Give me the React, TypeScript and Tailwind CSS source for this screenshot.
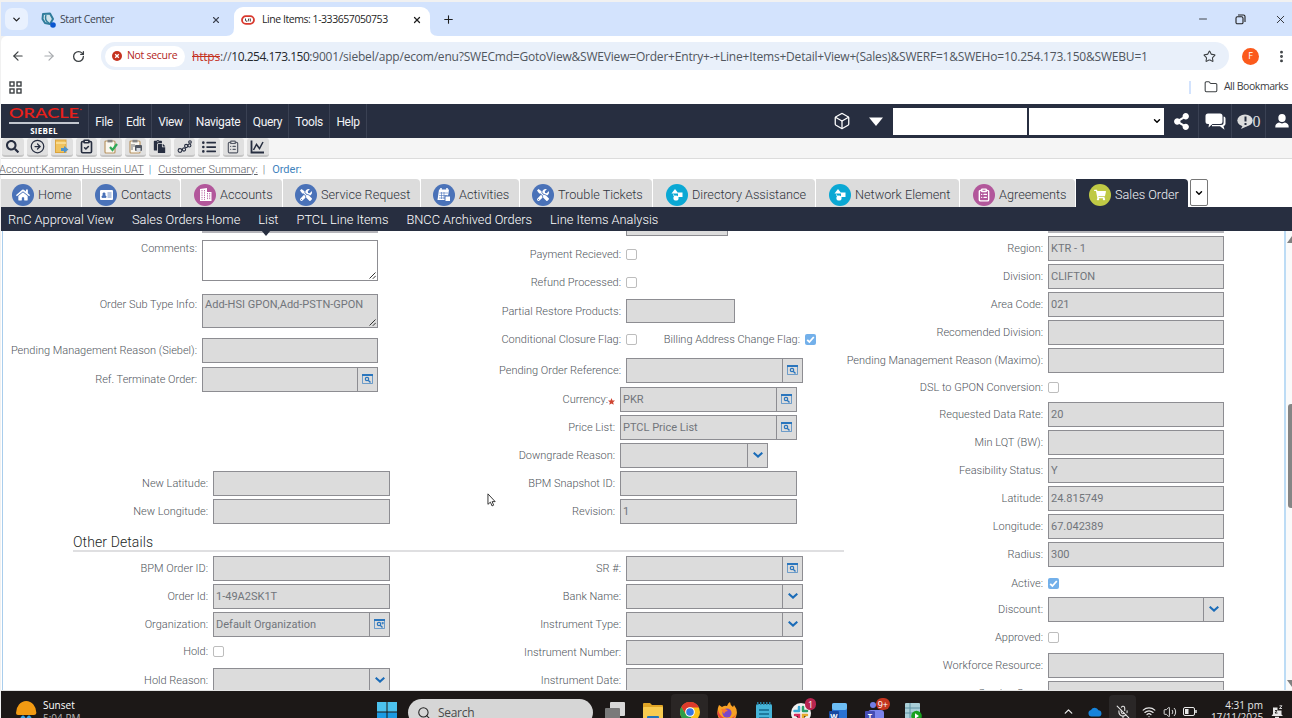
import type { ReactNode } from 'react';
import clsx from 'clsx';
import {
  ArrowLeft, ArrowRight, ChevronDown, ChevronUp, Folder, Minus, MoreVertical, Plus, RotateCw, Star, X, Box, Search,
  MicOff, Wifi, Volume2,
} from 'lucide-react';
import { FaHome, FaShoppingCart, FaShareAlt, FaSearch, FaPaste, FaListUl, FaTools } from 'react-icons/fa';
import { LuClipboardList, LuClipboardCheck, LuCircleArrowRight } from 'react-icons/lu';

/* ---------- browser ---------- */

function BrowserTabs() {
  return (
    <div className="flex h-[34px] shrink-0 items-end bg-[#d3e3fd] text-[#1f1f1f]">
      <div className="mb-[6px] ml-[4px] flex h-[22px] w-[23px] items-center justify-center rounded-[7px] bg-[#e9f1fe]">
        <ChevronDown size={11} strokeWidth={2.8} />
      </div>
      <div className="flex h-[34px] w-[206px] items-center pt-px pl-[13px] text-[#3c4350]">
        <svg width="15" height="16" viewBox="0 0 15 16">
          <path d="M2 2 L9 1.5 L12 7 L9 12 L4 11 L1.5 7 Z" fill="#cfe3ea" stroke="#2f7c9c" strokeWidth="2" strokeLinejoin="round" />
          <path d="M5 3 Q3 8 8 11" fill="none" stroke="#2f7c9c" strokeWidth="1.4" />
          <circle cx="12" cy="13" r="2.8" fill="#0b57d0" />
        </svg>
        <span className="ml-[4px] text-[10.5px] tracking-[-0.4px]">Start Center</span>
        <X size={10} strokeWidth={2.6} className="mr-[13px] ml-auto" />
      </div>
      <div className="relative flex h-[29px] w-[196px] items-center rounded-t-[9px] bg-white pb-[4px] pl-[7px]">
        <svg width="8" height="8" viewBox="0 0 8 8" className="absolute bottom-0 -left-[8px]">
          <path d="M8 0 V8 H0 Q8 8 8 0 Z" fill="#fff" />
        </svg>
        <svg width="8" height="8" viewBox="0 0 8 8" className="absolute -right-[8px] bottom-0">
          <path d="M0 0 V8 H8 Q0 8 0 0 Z" fill="#fff" />
        </svg>
        <svg width="14" height="10" viewBox="0 0 14 10">
          <rect x="1" y="1.2" width="12" height="7.6" rx="3.8" fill="#fff" stroke="#d93a2f" strokeWidth="1.8" />
          <path d="M4.5 3.5 V5 Q4.5 6.5 6 6.3 M7 6.5 L7.8 3.5 M9.3 3.5 V6.5" fill="none" stroke="#444" strokeWidth="1" />
        </svg>
        <span className="ml-[7px] text-[10.5px] tracking-[-0.45px] whitespace-nowrap">Line Items: 1-333657050753</span>
        <X size={10} strokeWidth={3} className="mr-[8px] ml-auto" />
      </div>
      <Plus size={13} strokeWidth={2} className="mb-[10px] ml-[12px]" />
      <div className="mr-[5px] ml-auto flex items-center self-center">
        <Minus size={12} strokeWidth={1.6} className="mr-[26px]" />
        <svg width="11" height="11" viewBox="0 0 11 11" fill="none" stroke="currentColor" strokeWidth="1.1" className="mr-[28px]">
          <rect x="1" y="2.8" width="7" height="7" rx="1.4" />
          <path d="M3 1 H8.4 Q10 1 10 2.6 V8" />
        </svg>
        <X size={13} strokeWidth={1.6} />
      </div>
    </div>
  );
}

function AddressBar() {
  return (
    <div className="flex h-[40px] shrink-0 items-center rounded-tl-[6px] bg-white text-[#3c4043]">
      <ArrowLeft size={14} strokeWidth={2.1} className="ml-[10px]" />
      <ArrowRight size={14} strokeWidth={2} className="ml-[17px] text-[#a8abaf]" />
      <RotateCw size={13} strokeWidth={2.4} className="ml-[16px]" />
      <div className="ml-[16px] flex h-[28px] w-[1128px] items-center rounded-full bg-[#e9f0fa]">
        <div className="ml-[4px] flex h-[21px] w-[80px] items-center rounded-full bg-white pl-[7px] text-[10.5px] whitespace-nowrap text-[#b3261e]">
          <svg width="10" height="10" viewBox="0 0 10 10">
            <circle cx="5" cy="5" r="5" fill="#c5321f" />
            <path d="M3.2 3.2 L6.8 6.8 M6.8 3.2 L3.2 6.8" stroke="#fff" strokeWidth="1.3" />
          </svg>
          <span className="ml-[5px] tracking-[-0.3px]">Not secure</span>
        </div>
        <span className="ml-[7px] pt-px text-[12px] tracking-[-0.2px] whitespace-nowrap text-[#50565e]">
          <span className="text-[#c5321f] line-through">https</span>://<span className="tracking-[-0.5px] text-[#23272c]">10.254.173.150</span>
          :9001/siebel/app/ecom/enu?SWECmd=GotoView&amp;SWEView=Order+Entry+-+Line+Items+Detail+View+(Sales)&amp;SWERF=1&amp;SWEHo=10.254.173.150&amp;SWEBU=1
        </span>
        <Star size={13} strokeWidth={2} className="mr-[13px] ml-auto" />
      </div>
      <div className="ml-[13px] flex size-[17px] items-center justify-center rounded-full bg-[#fb5a1c] text-[9px] text-white">F</div>
      <MoreVertical size={15} strokeWidth={2.6} className="ml-[15px]" />
    </div>
  );
}

function BookmarksBar() {
  return (
    <div className="flex h-[28px] shrink-0 items-center bg-white pb-[6px] text-[#3c4043]">
      <svg width="13" height="13" viewBox="0 0 13 13" fill="none" stroke="currentColor" strokeWidth="1.4" className="ml-[8px]">
        <rect x="1" y="1" width="4" height="4" />
        <rect x="8" y="1" width="4" height="4" />
        <rect x="1" y="8" width="4" height="4" />
        <rect x="8" y="8" width="4" height="4" />
      </svg>
      <div className="ml-auto h-[13px] w-[2px] bg-[#d3e3fd]" />
      <Folder size={14} strokeWidth={1.8} className="ml-[13px]" />
      <span className="mr-[4px] ml-[6px] text-[10.5px] tracking-[-0.45px]">All Bookmarks</span>
    </div>
  );
}

/* ---------- siebel header ---------- */

const menus = [
  { name: 'File', width: 'w-[31px]' },
  { name: 'Edit', width: 'w-[32px]' },
  { name: 'View', width: 'w-[38px]' },
  { name: 'Navigate', width: 'w-[57px]' },
  { name: 'Query', width: 'w-[42px]' },
  { name: 'Tools', width: 'w-[41px]' },
  { name: 'Help', width: 'w-[37px]' },
];

function SiebelHeader() {
  return (
    <div className="flex h-[34px] shrink-0 items-center bg-[#272e40] text-white">
      <div className="flex h-full w-[88px] flex-col border-r border-[#3a4153] pt-[4px] pl-[8px]">
        <svg width="73" height="11" viewBox="0 0 73 11" className="overflow-visible">
          <text x="0" y="10.2" textLength="70" lengthAdjust="spacingAndGlyphs" fill="#e8201a" fontFamily="Lato" fontSize="13" fontWeight="600">
            ORACLE
          </text>
          <circle cx="72" cy="1.5" r="0.8" fill="#e8201a" />
        </svg>
        <div className="mt-[3px] h-[1.5px] w-[70px] bg-[#c3c7cf]" />
        <div className="w-[70px] pt-[2px] text-center font-['Open_Sans'] text-[8px] leading-[9px] font-bold tracking-[0.3px]">SIEBEL</div>
      </div>
      {menus.map((m) => (
        <div key={m.name} className={clsx('flex h-full items-center justify-center border-r border-[#3a4153] pt-px text-[12px] tracking-[-0.35px] text-[#f2f3f5]', m.width)}>
          {m.name}
        </div>
      ))}
      <Box size={18} strokeWidth={1.7} className="ml-auto" />
      <svg width="14" height="9" viewBox="0 0 14 9" className="ml-[18px]">
        <path d="M0 0.5 H14 L7 9 Z" fill="#fff" />
      </svg>
      <div className="ml-[10px] h-[27px] w-[134px] bg-white" />
      <div className="ml-[2px] flex h-[27px] w-[135px] items-center justify-end bg-white pr-[2px] text-black">
        <ChevronDown size={10} strokeWidth={3.4} />
      </div>
      <div className="flex h-full w-[35px] items-center justify-center border-r border-[#3a4153]">
        <FaShareAlt size={17} />
      </div>
      <div className="flex h-full w-[33px] items-center justify-center border-r border-[#3a4153]">
        <svg width="21" height="17" viewBox="0 0 21 17" fill="#fff">
          <path d="M7 13.2 H15 L19.5 16.8 L18.5 13 Q20.5 12.6 20.5 10.8 V5.5 Q20.5 3.8 18.6 3.6 V9.5 Q18.6 12 16 12 H7 Z" />
          <path d="M3 0.5 H15 Q17.5 0.5 17.5 3 V8.5 Q17.5 11 15 11 H7.5 L3.5 14.5 L4 11 H3 Q0.5 11 0.5 8.5 V3 Q0.5 0.5 3 0.5 Z" />
        </svg>
      </div>
      <div className="flex h-full w-[34px] items-center justify-center border-r border-[#3a4153]">
        <svg width="16" height="15" viewBox="0 0 16 15">
          <ellipse cx="8" cy="6.5" rx="7.7" ry="6" fill="#dcdcdc" />
          <path d="M6 11 L4 15 L10.5 12 Z" fill="#dcdcdc" />
          <path d="M8.5 2.5 V7.5 M8.5 9 V11" stroke="#272e40" strokeWidth="2" />
        </svg>
        <span className="pt-[2px] font-['Liberation_Serif'] text-[16px] leading-[16px] text-[#dcdcdc]">0</span>
      </div>
      <div className="flex w-[26px] justify-end pr-[3px]">
        <svg width="14" height="14" viewBox="0 0 14 14" fill="#fff">
          <ellipse cx="7" cy="4" rx="3.7" ry="4" />
          <path d="M0.3 13.5 Q0 9.5 4 8.6 Q7 10.2 10 8.6 Q14 9.5 13.7 13.5 Z" />
        </svg>
      </div>
    </div>
  );
}

const clip = (mark: ReactNode) => (
  <svg width="15" height="15" viewBox="0 0 15 15">
    <rect x="2" y="2" width="10" height="12" rx="1" fill="#faf7ef" stroke="#b99665" strokeWidth="1.2" />
    <rect x="4.5" y="0.8" width="5" height="2.6" fill="#858585" />
    {mark}
  </svg>
);

const toolbar: ReactNode[] = [
  <FaSearch size={13} />,
  <LuCircleArrowRight size={15} />,
  <svg width="15" height="15" viewBox="0 0 15 15">
    <rect x="1.5" y="1" width="10.5" height="12.5" fill="#f0c35e" stroke="#dba43f" />
    <path d="M2 4 H12" stroke="#fbe2a0" strokeWidth="1.5" />
    <path d="M7 9 H10 V7 L14.5 10.5 L10 14 V12 H7 Z" fill="#4f93cb" />
  </svg>,
  <LuClipboardCheck size={15} strokeWidth={2.6} />,
  clip(<path d="M7 8 L9.5 11 L14 5" fill="none" stroke="#2faa58" strokeWidth="2.2" />),
  clip(
    <g>
      <path d="M4 5 V11 M6 5 V8" stroke="#777" />
      <rect x="7" y="6" width="7" height="6" rx="1" fill="#505661" />
      <rect x="8.5" y="9" width="4" height="4" fill="#d9dde2" />
    </g>,
  ),
  <FaPaste size={13} />,
  <svg width="15" height="14" viewBox="0 0 15 14" fill="none" stroke="currentColor" strokeWidth="1.1">
    <circle cx="3" cy="10.5" r="1.9" />
    <circle cx="7" cy="9.5" r="1.6" />
    <circle cx="9.2" cy="6" r="1.6" />
    <circle cx="12.4" cy="5.5" r="1.5" />
    <circle cx="13" cy="2" r="1.3" />
  </svg>,
  <FaListUl size={14} />,
  <LuClipboardList size={14} className="text-[#555a66]" />,
  <svg width="15" height="14" viewBox="0 0 15 14" fill="none" stroke="currentColor" strokeWidth="1.8">
    <path d="M1.5 0.5 V12.5 H14" />
    <path d="M3.5 10 L6.5 4.5 L9.5 8.5 L13 2" strokeWidth="1.5" />
  </svg>,
];

function Toolbar() {
  return (
    <div className="flex h-[21px] shrink-0 items-start gap-[3px] border-b border-[#dcdcdc] bg-[#f5f5f5] pl-px text-[#272e40]">
      {toolbar.map((icon, i) => (
        <div key={i} className="flex h-[19px] w-[21.5px] items-center justify-center rounded-[3px] border-b-2 border-[#c6c6c6] bg-[#e0e0e0]">
          {icon}
        </div>
      ))}
    </div>
  );
}

function Breadcrumbs() {
  return (
    <div className="flex h-[20px] shrink-0 items-center bg-white pt-[2px] text-[11px] font-light whitespace-nowrap text-[#5f6369]">
      <span className="-ml-[2px] underline">Account:Kamran Hussein UAT</span>
      <span className="ml-[5px] text-[#2a6db0]">|</span>
      <span className="ml-[7px] underline">Customer Summary:</span>
      <span className="ml-[5px]">|</span>
      <span className="ml-[7px] font-normal text-[#3f83bd]">Order:</span>
    </div>
  );
}

const shapes = (
  <svg width="12" height="12" viewBox="0 0 12 12" fill="#fff">
    <path d="M4 0 L7.5 4.5 H0.5 Z" />
    <rect x="7" y="3.5" width="4.5" height="4.5" />
    <circle cx="5" cy="9" r="2.6" />
    <path d="M2.5 5.5 Q3 8 5 8.5" fill="none" stroke="#fff" />
  </svg>
);

const card = (
  <svg width="13" height="10" viewBox="0 0 13 10">
    <rect x="0" y="0" width="13" height="10" rx="1" fill="#fff" />
    <path d="M2 7.5 V6 H3 V3 H5 V6 H6 V7.5 Z M7.5 3 H11.5 M7.5 5 H11.5 M7.5 7 H11.5" fill="#4a72b8" stroke="#4a72b8" strokeWidth="0.8" />
  </svg>
);

const building = (
  <svg width="13" height="13" viewBox="0 0 13 13">
    <path d="M1 1 L8 0 V4 H12.5 V13 H1 Z" fill="#fff" />
    <path d="M3 2 V12 M5.5 2 V12 M8.5 5 V12 M10.7 5 V12" stroke="#b2579b" strokeWidth="0.9" strokeDasharray="1.3 1" />
  </svg>
);

const calendar = (
  <svg width="14" height="14" viewBox="0 0 14 14">
    <path d="M2 1.5 H12 L10.5 12 H0.5 Z" fill="#fff" />
    <path d="M2.5 5 H11 M2.2 7.5 H10.5 M2 10 H8 M4.5 4 V11 M7 4 V11" stroke="#4a72b8" strokeWidth="0.6" />
    <path d="M4 0 V3 M10 0 V3" stroke="#fff" strokeWidth="1.5" />
    <rect x="8" y="8" width="5.5" height="5.5" fill="#fff" stroke="#4a72b8" />
  </svg>
);

const screens = [
  { name: 'Home', width: 'w-[80px]', pad: 'pl-[11px]', bg: 'bg-[#4a72b8]', icon: <FaHome size={14} /> },
  { name: 'Contacts', width: 'w-[98px]', pad: 'pl-[13px]', bg: 'bg-[#4a72b8]', icon: card },
  { name: 'Accounts', width: 'w-[101px]', pad: 'pl-[13px]', bg: 'bg-[#b2579b]', icon: building },
  { name: 'Service Request', width: 'w-[137px]', pad: 'pl-[12px]', bg: 'bg-[#4a72b8]', icon: <FaTools size={12} /> },
  { name: 'Activities', width: 'w-[98px]', pad: 'pl-[12px]', bg: 'bg-[#4a72b8]', icon: calendar },
  { name: 'Trouble Tickets', width: 'w-[132px]', pad: 'pl-[12px]', bg: 'bg-[#4a72b8]', icon: <FaTools size={12} /> },
  { name: 'Directory Assistance', width: 'w-[162px]', pad: 'pl-[13px]', bg: 'bg-[#0aa8d4]', icon: shapes },
  { name: 'Network Element', width: 'w-[143px]', pad: 'pl-[13px]', bg: 'bg-[#0aa8d4]', icon: shapes },
  { name: 'Agreements', width: 'w-[115px]', pad: 'pl-[13px]', bg: 'bg-[#b2579b]', icon: <LuClipboardList size={14} strokeWidth={2.4} /> },
  { name: 'Sales Order', width: 'w-[112px]', pad: 'pl-[13px]', bg: 'bg-[#bfc945]', icon: <FaShoppingCart size={12} />, active: true },
];

function ScreenTabs() {
  return (
    <div className="flex h-[28px] shrink-0 gap-px bg-white">
      {screens.map((s) => (
        <div
          key={s.name}
          className={clsx(
            'flex h-full shrink-0 items-center rounded-tr-[4px] pt-[3px] text-[12.7px] whitespace-nowrap',
            s.width,
            s.pad,
            s.active ? 'bg-[#272e40] text-[#f2f3f5]' : 'bg-[#dcdcdc] font-light text-[#30343c]',
          )}
        >
          <span className={clsx('mr-[4px] flex size-[22px] shrink-0 items-center justify-center rounded-full text-white', s.bg)}>{s.icon}</span>
          <span className={clsx(s.active && 'font-light')}>{s.name}</span>
        </div>
      ))}
      <div className="ml-px flex h-[27px] w-[18px] items-center justify-center rounded-[2px] border border-[#777] bg-white text-black">
        <ChevronDown size={10} strokeWidth={3.4} />
      </div>
    </div>
  );
}

function ViewTabs() {
  return (
    <div className="flex h-[24px] shrink-0 items-center gap-[18px] bg-[#272e40] pt-px pl-[7px] text-[12.8px] font-light whitespace-nowrap text-white">
      <span>RnC Approval View</span>
      <span>Sales Orders Home</span>
      <span className="relative">
        List
        <span className="absolute top-[20px] left-[3px] border-x-[5px] border-t-[6px] border-x-transparent border-t-[#272e40]" />
      </span>
      <span>PTCL Line Items</span>
      <span>BNCC Archived Orders</span>
      <span>Line Items Analysis</span>
    </div>
  );
}

/* ---------- form ---------- */

type Kind = 'text' | 'pick' | 'mvg' | 'drop' | 'check' | 'checked' | 'area';

interface FieldProps {
  label: string;
  kind?: Kind;
  value?: string;
  row?: string;
  labelWidth: string;
  width?: string;
  required?: boolean;
}

function PickIcon({ multi }: { multi?: boolean }) {
  return (
    <svg width="11" height="10" viewBox="0 0 11 10" fill="none" stroke="#2b76bd" className="mb-px">
      <path d="M0.5 1 V9.5 H10.5 V1" strokeWidth="0.9" opacity="0.7" />
      <path d="M0 1 H11" strokeWidth="2" />
      <circle cx="5" cy="5" r="1.7" strokeWidth="1.2" />
      <path d="M6.2 6.2 L8.5 8.4" strokeWidth="1.4" />
      {multi && <path d="M7.5 4 H10 M8.7 3 V5.4" strokeWidth="0.9" />}
    </svg>
  );
}

function CheckBox({ checked }: { checked?: boolean }) {
  return (
    <span
      className={clsx(
        'flex size-[11px] shrink-0 items-center justify-center rounded-[2px]',
        checked ? 'bg-[#73b0ea]' : 'border border-[#bdbdbd] bg-white',
      )}
    >
      {checked && (
        <svg width="9" height="9" viewBox="0 0 9 9" fill="none" stroke="#fff" strokeWidth="1.8">
          <path d="M1.2 4.8 L3.4 7 L7.8 2" />
        </svg>
      )}
    </span>
  );
}

function Grip() {
  return (
    <svg width="7" height="7" viewBox="0 0 7 7" stroke="#333" className="absolute right-px bottom-px">
      <path d="M0.5 6.5 L6.5 0.5 M3.8 6.8 L6.8 3.8" />
    </svg>
  );
}

function Field({ label, kind = 'text', value, row = 'h-[25px] mt-[3px]', labelWidth, width = 'w-[176px]', required }: FieldProps) {
  const isCheck = kind === 'check' || kind === 'checked';
  const hasButton = kind === 'pick' || kind === 'mvg' || kind === 'drop';
  return (
    <div className={clsx('flex shrink-0', row, isCheck ? 'items-center' : 'items-stretch')}>
      <div
        className={clsx(
          'flex shrink-0 justify-end pr-[5px] text-[11px] font-light whitespace-nowrap text-[#50555c]',
          labelWidth,
          kind !== 'area' && 'items-center pt-[2px]',
          kind === 'area' && 'items-start leading-[14px]',
          kind === 'area' && (value ? 'pt-[4px]' : 'pt-[2px]'),
        )}
      >
        {label}
        {required && (
          <svg width="7" height="7" viewBox="0 0 10 10" className="mt-[2px]">
            <path d="M5 0 L6.4 3.4 L10 3.7 L7.3 6.1 L8.2 9.8 L5 7.8 L1.8 9.8 L2.7 6.1 L0 3.7 L3.6 3.4 Z" fill="#cf4532" />
          </svg>
        )}
      </div>
      {isCheck && <CheckBox checked={kind === 'checked'} />}
      {!isCheck && (
        <div
          className={clsx(
            'relative flex shrink-0 border border-[#8d8d92] text-[11px] whitespace-nowrap text-[#71757b]',
            width,
            kind === 'area' && !value ? 'bg-white' : 'bg-[#dcdcdc]',
          )}
        >
          <span className={clsx('flex flex-1 pl-[2px]', kind === 'area' ? 'items-start pt-[3px] leading-[14px]' : 'items-center pt-px')}>{value}</span>
          {hasButton && (
            <span className="flex w-[20px] items-center justify-center border-l border-[#8d8d92]">
              {kind === 'drop' ? (
                <svg width="10" height="6" viewBox="0 0 10 6" fill="none" stroke="#1b6cb8" strokeWidth="2" className="mb-[2px]">
                  <path d="M0.7 0.7 L5 4.6 L9.3 0.7" />
                </svg>
              ) : (
                <PickIcon multi={kind === 'mvg'} />
              )}
            </span>
          )}
          {kind === 'area' && <Grip />}
        </div>
      )}
    </div>
  );
}

function LeftColumn() {
  return (
    <div className="flex w-[420px] shrink-0 flex-col">
      <div className="ml-[200px] h-[2px] w-[176px] shrink-0 bg-[#b5b5ba]" />
      <Field label="Comments:" kind="area" row="h-[41px] mt-[7px]" labelWidth="w-[200px]" />
      <Field label="Order Sub Type Info:" kind="area" value="Add-HSI GPON,Add-PSTN-GPON" row="h-[34px] mt-[13px]" labelWidth="w-[200px]" />
      <Field label="Pending Management Reason (Siebel):" row="h-[25px] mt-[10px]" labelWidth="w-[200px]" />
      <Field label="Ref. Terminate Order:" kind="pick" row="h-[25px] mt-[4px]" labelWidth="w-[200px]" />
      <Field label="New Latitude:" row="h-[25px] mt-[79px]" labelWidth="w-[211px]" width="w-[177px]" />
      <Field label="New Longitude:" labelWidth="w-[211px]" width="w-[177px]" />
    </div>
  );
}

function MiddleColumn() {
  return (
    <div className="flex w-[420px] shrink-0 flex-col">
      <div className="ml-[204px] h-[5px] w-[102px] shrink-0 border border-t-0 border-[#8d8d92] bg-[#dcdcdc]" />
      <Field label="Payment Recieved:" kind="check" row="h-[16px] mt-[10px]" labelWidth="w-[204px]" />
      <Field label="Refund Processed:" kind="check" row="h-[16px] mt-[12px]" labelWidth="w-[204px]" />
      <Field label="Partial Restore Products:" row="h-[24px] mt-[9px]" labelWidth="w-[204px]" width="w-[109px]" />
      <div className="mt-[8px] flex h-[16px]">
        <Field label="Conditional Closure Flag:" kind="check" row="h-[16px]" labelWidth="w-[204px]" />
        <Field label="Billing Address Change Flag:" kind="checked" row="h-[16px]" labelWidth="w-[168px]" />
      </div>
      <Field label="Pending Order Reference:" kind="pick" row="h-[25px] mt-[11px]" labelWidth="w-[204px]" width="w-[177px]" />
      <Field label="Currency:" kind="pick" value="PKR" row="h-[25px] mt-[4px]" labelWidth="w-[198px]" width="w-[177px]" required />
      <Field label="Price List:" kind="pick" value="PTCL Price List" labelWidth="w-[198px]" width="w-[177px]" />
      <Field label="Downgrade Reason:" kind="drop" labelWidth="w-[198px]" width="w-[148px]" />
      <Field label="BPM Snapshot ID:" labelWidth="w-[198px]" width="w-[177px]" />
      <Field label="Revision:" value="1" labelWidth="w-[198px]" width="w-[177px]" />
    </div>
  );
}

function OtherDetails() {
  return (
    <div className="flex">
      <div className="flex w-[420px] shrink-0 flex-col">
        <Field label="BPM Order ID:" labelWidth="w-[211px]" width="w-[177px]" />
        <Field label="Order Id:" value="1-49A2SK1T" labelWidth="w-[211px]" width="w-[177px]" />
        <Field label="Organization:" kind="mvg" value="Default Organization" labelWidth="w-[211px]" width="w-[177px]" />
        <Field label="Hold:" kind="check" row="h-[16px] mt-[6px]" labelWidth="w-[211px]" />
        <Field label="Hold Reason:" kind="drop" row="h-[25px] mt-[9px]" labelWidth="w-[211px]" width="w-[177px]" />
      </div>
      <div className="flex w-[420px] shrink-0 flex-col">
        <Field label="SR #:" kind="pick" labelWidth="w-[204px]" width="w-[177px]" />
        <Field label="Bank Name:" kind="drop" labelWidth="w-[204px]" width="w-[177px]" />
        <Field label="Instrument Type:" kind="drop" labelWidth="w-[204px]" width="w-[177px]" />
        <Field label="Instrument Number:" labelWidth="w-[204px]" width="w-[177px]" />
        <Field label="Instrument Date:" labelWidth="w-[204px]" width="w-[177px]" />
      </div>
    </div>
  );
}

function RightColumn() {
  return (
    <div className="flex flex-1 flex-col">
      <div className="ml-[205px] h-[2px] w-[176px] shrink-0 bg-[#b5b5ba]" />
      <Field label="Region:" value="KTR - 1" labelWidth="w-[205px]" />
      <Field label="Division:" value="CLIFTON" labelWidth="w-[205px]" />
      <Field label="Area Code:" value="021" labelWidth="w-[205px]" />
      <Field label="Recomended Division:" labelWidth="w-[205px]" />
      <Field label="Pending Management Reason (Maximo):" labelWidth="w-[205px]" />
      <Field label="DSL to GPON Conversion:" kind="check" row="h-[16px] mt-[6px]" labelWidth="w-[205px]" />
      <Field label="Requested Data Rate:" value="20" row="h-[25px] mt-[7px]" labelWidth="w-[205px]" />
      <Field label="Min LQT (BW):" labelWidth="w-[205px]" />
      <Field label="Feasibility Status:" value="Y" labelWidth="w-[205px]" />
      <Field label="Latitude:" value="24.815749" labelWidth="w-[205px]" />
      <Field label="Longitude:" value="67.042389" labelWidth="w-[205px]" />
      <Field label="Radius:" value="300" labelWidth="w-[205px]" />
      <Field label="Active:" kind="checked" row="h-[16px] mt-[8px]" labelWidth="w-[205px]" />
      <Field label="Discount:" kind="drop" row="h-[25px] mt-[6px]" labelWidth="w-[205px]" />
      <Field label="Approved:" kind="check" row="h-[16px] mt-[7px]" labelWidth="w-[205px]" />
      <Field label="Workforce Resource:" row="h-[25px] mt-[8px]" labelWidth="w-[205px]" />
      <Field label="Service Case:" labelWidth="w-[205px]" />
    </div>
  );
}

function OrderForm() {
  return (
    <div className="relative flex h-[459px] shrink-0 overflow-hidden bg-white">
      <div className="mr-px ml-px w-px bg-[#a9cdec]" />
      <div className="-ml-[2px] flex w-[841px] shrink-0 flex-col">
        <div className="flex">
          <LeftColumn />
          <MiddleColumn />
        </div>
        <div className="mt-[7px] -mr-px ml-[71px] h-[21px] border-b-2 border-[#dfdfe1] text-[14px] leading-[22px] font-light tracking-[0.1px] text-[#1c1f25]">
          Other Details
        </div>
        <div className="pt-px">
          <OtherDetails />
        </div>
      </div>
      <RightColumn />
      <div className="flex w-[8px] shrink-0 flex-col items-end border-l-2 border-[#bddcf5] bg-[#fafafa] pt-[5px]">
        <svg width="5" height="7" viewBox="0 0 5 7">
          <path d="M0 7 L5 0 V7 Z" fill="#808080" />
        </svg>
        <div className="mt-[161px] h-[104px] w-[4px] rounded-l-[3px] bg-[#858585]" />
        <svg width="5" height="7" viewBox="0 0 5 7" className="mt-[172px]">
          <path d="M0 0 L5 7 V0 Z" fill="#808080" />
        </svg>
      </div>
      <svg width="9" height="14" viewBox="0 0 8 13" className="absolute top-[262px] left-[486px]">
        <path d="M0.7 0.8 V10.5 L3 8.5 L4.5 12 L6 11.3 L4.6 8 H7.4 Z" fill="#fff" stroke="#333" strokeWidth="0.9" />
      </svg>
    </div>
  );
}

/* ---------- taskbar ---------- */

const apps: ReactNode[] = [
  <svg width="24" height="22" viewBox="0 0 24 22">
    <rect x="6" y="0" width="15" height="14" rx="1" fill="#d8d8d8" />
    <rect x="1" y="6" width="15" height="14" rx="1" fill="#7a7a7a" />
  </svg>,
  <svg width="24" height="22" viewBox="0 0 24 22">
    <path d="M2 2 Q2 1 3 1 H9 L11 3 H21 Q22 3 22 4 V20 H2 Z" fill="#e0a526" />
    <rect x="2" y="5" width="20" height="15" rx="1" fill="#f8cb50" />
    <rect x="6" y="14" width="12" height="6" rx="1" fill="#2274b8" />
  </svg>,
  <svg width="22" height="22" viewBox="0 0 22 22">
    <circle cx="11" cy="10" r="10" fill="#fbc116" />
    <path d="M2.3 5 A10 10 0 0 1 20 5.5 H11 A4.8 4.8 0 0 0 6.6 12 Z" fill="#dc3a2c" />
    <path d="M2.3 5 L7 12.5 Q9 15 12.5 14.5 L10 20 A10 10 0 0 1 2.3 5 Z" fill="#2f9e4c" />
    <circle cx="11" cy="10" r="4.8" fill="#fff" />
    <circle cx="11" cy="10" r="3.8" fill="#3478e5" />
  </svg>,
  <svg width="22" height="22" viewBox="0 0 22 22">
    <path d="M3 3 L6 5 Q9 3 11 4 Q12 1 14 0 Q14 3 17 5 L18 3 Q22 8 20.5 13 A9.6 9.6 0 0 1 1.5 12 Q1 7 3 3 Z" fill="#f8a024" />
    <path d="M2 8 Q4 16 12 17 Q18 16 20 12 A9.6 9.6 0 0 1 1.5 12 Z" fill="#ee4540" />
    <circle cx="11" cy="11" r="4.6" fill="#7a47c9" />
    <path d="M5 7 Q10 6 12 9 Q9 9 8 12 Z" fill="#fb7a2c" />
  </svg>,
  <svg width="18" height="22" viewBox="0 0 18 22">
    <rect x="1" y="2" width="16" height="20" rx="1.5" fill="#45b4d8" />
    <path d="M2 1.5 H16" stroke="#267a9a" strokeWidth="3" strokeDasharray="1.5 1.5" />
    <path d="M4 8 H14 M4 12 H14 M4 16 H14" stroke="#13678a" strokeWidth="1.5" />
  </svg>,
  <svg width="22" height="22" viewBox="0 0 22 22">
    <circle cx="11" cy="11" r="10" fill="#f1f1f1" />
    <g strokeWidth="2.5" strokeLinecap="round">
      <path d="M9 5 V9 M4.5 9 H8" stroke="#36a9d8" />
      <path d="M13 5 V9 M14 9 H17" stroke="#2a9d6a" />
      <path d="M5 13 H9 V17" stroke="#d72c5c" />
      <path d="M13 17 V13 H17" stroke="#e5a92d" />
    </g>
  </svg>,
  <svg width="22" height="22" viewBox="0 0 22 22">
    <rect x="5" y="1" width="15" height="20" rx="2" fill="#2a72d4" />
    <rect x="5" y="1" width="15" height="7" rx="2" fill="#6cbdf4" />
    <rect x="2" y="9" width="10" height="10" rx="1" fill="#1848a0" />
    <text x="7" y="16.5" fill="#fff" fontSize="7.5" fontWeight="700" textAnchor="middle">W</text>
  </svg>,
  <svg width="22" height="22" viewBox="0 0 22 22">
    <circle cx="9" cy="3" r="3" fill="#737de5" />
    <rect x="4" y="8" width="16" height="14" rx="3" fill="#7b83eb" />
    <rect x="1" y="9" width="10" height="10" rx="1" fill="#454db4" />
    <text x="6" y="16.5" fill="#fff" fontSize="7.5" fontWeight="700" textAnchor="middle">T</text>
  </svg>,
  <svg width="22" height="22" viewBox="0 0 22 22">
    <rect x="4" y="1" width="15" height="18" rx="1" fill="#a9cfd8" />
    <path d="M4 6 H19 M4 11 H19 M9 1 V19" stroke="#5f92a4" />
    <circle cx="15.5" cy="14" r="5.3" fill="#17a11d" />
    <path d="M14 11.3 L18 14 L14 16.7 Z" fill="#fff" />
  </svg>,
];

const badges: Record<number, { text: string; bg: string }> = {
  5: { text: '1', bg: 'bg-[#b82550]' },
  7: { text: '9+', bg: 'bg-[#c4351f]' },
};

function Taskbar() {
  return (
    <div className="flex h-[27px] shrink-0 items-start overflow-hidden bg-[#1c1817] text-white">
      <svg width="22" height="24" viewBox="0 0 22 24" className="mt-[9px] ml-[14px]">
        <path d="M1 13 A10.2 12 0 0 1 21.4 13 Q21 15 19 15 H3 Q1 15 1 13 Z" fill="#f29a12" />
        <path d="M6 18 L8 16.5 L10 18 M12 18 L14 16.5 L16 18" fill="none" stroke="#35a3e6" strokeWidth="2" />
      </svg>
      <div className="mt-[8px] ml-[6px] w-[60px] text-[10px] leading-[12.5px]">
        <div>Sunset</div>
        <div className="text-[#b5b5b5]">5:04 PM</div>
      </div>
      <svg width="20" height="20" viewBox="0 0 20 20" className="mt-[11px] ml-[274px]">
        <path d="M0 0 H9.5 V9.5 H0 Z M10.5 0 H20 V9.5 H10.5 Z" fill="#4cc2ee" />
        <path d="M0 10.5 H9.5 V20 H0 Z M10.5 10.5 H20 V20 H10.5 Z" fill="#1c9be4" />
      </svg>
      <div className="mt-[8px] ml-[11px] flex h-[27px] w-[185px] shrink-0 items-center rounded-full bg-[#d6d6d6] pl-[9px] text-[12px] text-[#4a4a4a]">
        <Search size={14} strokeWidth={1.8} className="text-[#222]" />
        <span className="ml-[7px] tracking-[-0.3px]">Search</span>
      </div>
      <div className="ml-[4px] flex">
        {apps.map((app, i) => (
          <div key={i} className={clsx('relative mt-[3px] flex h-[30px] w-[37px] items-start justify-center rounded-[4px] pt-[8px]', i === 2 && 'bg-[#2a2625]')}>
            {app}
            {badges[i] && (
              <span
                className={clsx(
                  'absolute top-[4px] right-[3px] flex h-[12px] min-w-[11px] items-center justify-center rounded-full px-[2px] text-[9px] leading-none',
                  badges[i].bg,
                )}
              >
                {badges[i].text}
              </span>
            )}
          </div>
        ))}
      </div>
      <div className="ml-auto flex items-start text-[#e8e8e8]">
        <ChevronUp size={13} strokeWidth={2.4} className="mt-[14px]" />
        <svg width="14" height="10" viewBox="0 0 14 10" className="mt-[16px] ml-[13px]">
          <path d="M3.5 9.5 A3.3 3.3 0 0 1 3 3 A4.2 4.2 0 0 1 10.5 3.2 A3.2 3.2 0 0 1 11 9.5 Z" fill="#1684dc" />
        </svg>
        <div className="mt-[4px] ml-[7px] flex h-[30px] w-[27px] justify-center rounded-[4px] bg-[#2a2727] pt-[10px]">
          <MicOff size={14} strokeWidth={1.8} />
        </div>
        <Wifi size={14} strokeWidth={2} className="mt-[14px] ml-[6px]" />
        <Volume2 size={14} strokeWidth={1.6} className="mt-[14px] ml-[7px]" />
        <svg width="14" height="10" viewBox="0 0 14 10" fill="none" stroke="currentColor" className="mt-[16px] ml-[6px]">
          <rect x="0.5" y="0.5" width="11" height="8" rx="1.5" />
          <rect x="2.5" y="2.5" width="2.5" height="4" fill="currentColor" />
          <path d="M13 3 V6" strokeWidth="1.5" />
        </svg>
        <div className="mt-[8px] ml-[12px] w-[54px] text-right text-[10px] leading-[12px] whitespace-nowrap">
          <div>4:31 pm</div>
          <div className="tracking-[-0.1px]">17/11/2025</div>
        </div>
        <svg width="13" height="14" viewBox="0 0 13 14" className="mt-[14px] mr-[8px] ml-[8px]">
          <path d="M2 2.5 H6.5 V5.5 H10.5 V9.5 L12 11 H0.5 L2 9 Z" fill="#e8e8e8" />
          <path d="M4 12.5 H8" stroke="#e8e8e8" strokeWidth="1.5" />
          <path d="M8.5 0.8 H11 L8.5 3.5 H11" fill="none" stroke="#e8e8e8" strokeWidth="0.9" />
          <path d="M4 5.5 H6 L4 8 H6.5" fill="none" stroke="#1c1817" strokeWidth="0.9" />
        </svg>
      </div>
    </div>
  );
}

export default function App() {
  return (
    <div className="flex h-[718px] w-[1292px] flex-col overflow-hidden bg-[#f1f1f1] pt-[2px] pl-px font-['Open_Sans',sans-serif]">
      <BrowserTabs />
      <AddressBar />
      <BookmarksBar />
      <div className="flex flex-col font-['Roboto',sans-serif]">
        <SiebelHeader />
        <Toolbar />
        <Breadcrumbs />
        <ScreenTabs />
        <div className="relative z-10 flex flex-col">
          <ViewTabs />
        </div>
        <OrderForm />
      </div>
      <div className="h-px shrink-0 bg-[#e3e3e3]" />
      <Taskbar />
    </div>
  );
}
